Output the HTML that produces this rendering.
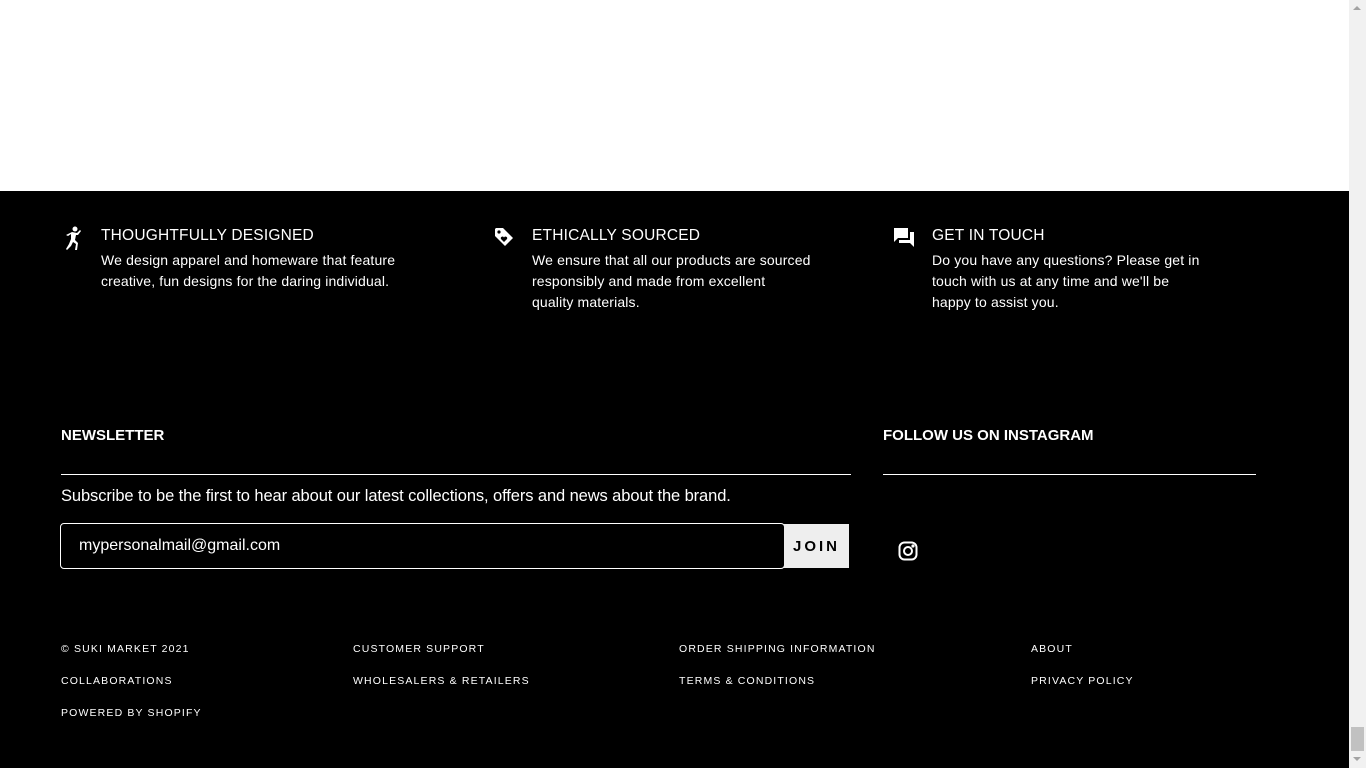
<!DOCTYPE html>
<html><head><meta charset="utf-8"><style>
*{margin:0;padding:0;box-sizing:border-box}
body{width:1366px;height:768px;overflow:hidden;background:#fff;font-family:"Liberation Sans",sans-serif;color:#fff;position:relative}
.foot{position:absolute;left:0;top:191px;width:1349px;height:577px;background:#000}
.a{position:absolute;white-space:nowrap}
.h{font-size:15.5px;letter-spacing:0.2px}
.p{font-size:14px;line-height:21px;letter-spacing:0.15px}
.s{font-size:10.5px;letter-spacing:1.15px}
.sb{position:absolute;left:1349px;top:0;width:17px;height:768px;background:#f1f1f1}
</style></head><body>
<div class="foot"></div>
<svg class="a" style="left:64px;top:226px" width="18" height="24" viewBox="0 0 18 24" fill="#fff"><circle cx="11" cy="3" r="2.5"/><path d="M8 6l5 1 3-3 1 1-3 4-2 0-1 5 3 3-1 7-2 0 1-6-3-2-2 4-4 4-1-1 3-5 2-5 0-5-3 2-2-1z"/></svg>
<svg class="a" style="left:494px;top:227px" width="20" height="20" viewBox="0 0 20 20"><path d="M1 2v7l10 10 8-8L9 1H2z" fill="#fff"/><circle cx="5" cy="5" r="1.6" fill="#000"/><path d="M10 15l-3-3a1.6 1.6 0 0 1 3-1.5a1.6 1.6 0 0 1 3 1.5z" fill="#000"/></svg>
<svg class="a" style="left:893px;top:227px" width="22" height="21" viewBox="0 0 22 21" fill="#fff"><path d="M1 1h14v10H5l-4 4z"/><path d="M17 5h4v15l-4-4H6v-3h11z"/></svg>
<div class="a h" style="left:101px;top:227px">THOUGHTFULLY DESIGNED</div>
<div class="a p" style="left:101px;top:250px">We design apparel and homeware that feature<br>creative, fun designs for the daring individual.</div>
<div class="a h" style="left:532px;top:227px">ETHICALLY SOURCED</div>
<div class="a p" style="left:532px;top:250px">We ensure that all our products are sourced<br>responsibly and made from excellent<br>quality materials.</div>
<div class="a h" style="left:932px;top:227px">GET IN TOUCH</div>
<div class="a p" style="left:932px;top:250px">Do you have any questions? Please get in<br>touch with us at any time and we'll be<br>happy to assist you.</div>
<div class="a" style="left:61px;top:427px;font-size:15px;font-weight:bold">NEWSLETTER</div>
<div class="a" style="left:61px;top:474px;width:790px;height:1px;background:#fff"></div>
<div class="a" style="left:883px;top:427px;font-size:15px;font-weight:bold">FOLLOW US ON INSTAGRAM</div>
<div class="a" style="left:883px;top:474px;width:373px;height:1px;background:#fff"></div>
<div class="a" style="left:61px;top:487px;font-size:16.5px;letter-spacing:-0.1px">Subscribe to be the first to hear about our latest collections, offers and news about the brand.</div>
<div class="a" style="left:60px;top:523px;width:725px;height:46px;border:1px solid #fff;border-radius:4px"></div>
<div class="a" style="left:79px;top:537px;font-size:16px">mypersonalmail@gmail.com</div>
<div class="a" style="left:784px;top:524px;width:65px;height:44px;background:#eee;color:#000;font-weight:bold;font-size:15px;letter-spacing:3px;text-align:center;line-height:46px">JOIN</div>
<svg class="a" style="left:898px;top:541px" width="20" height="20" viewBox="0 0 20 20" fill="none" stroke="#fff" stroke-width="2"><rect x="1.5" y="1.5" width="17" height="17" rx="5"/><circle cx="10" cy="10" r="4"/><circle cx="15" cy="5" r=".6" fill="#fff"/></svg>
<div class="a s" style="left:61px;top:643px">© SUKI MARKET 2021</div>
<div class="a s" style="left:61px;top:675px">COLLABORATIONS</div>
<div class="a s" style="left:61px;top:707px">POWERED BY SHOPIFY</div>
<div class="a s" style="left:353px;top:643px">CUSTOMER SUPPORT</div>
<div class="a s" style="left:353px;top:675px">WHOLESALERS &amp; RETAILERS</div>
<div class="a s" style="left:679px;top:643px">ORDER SHIPPING INFORMATION</div>
<div class="a s" style="left:679px;top:675px">TERMS &amp; CONDITIONS</div>
<div class="a s" style="left:1031px;top:643px">ABOUT</div>
<div class="a s" style="left:1031px;top:675px">PRIVACY POLICY</div>
<div class="sb">
<div style="position:absolute;left:4px;top:6px;width:0;height:0;border-left:4px solid transparent;border-right:4px solid transparent;border-bottom:4px solid #a3a3a3"></div>
<div style="position:absolute;left:2px;top:727px;width:13px;height:24px;background:#c1c1c1"></div>
<div style="position:absolute;left:4px;top:757px;width:0;height:0;border-left:4px solid transparent;border-right:4px solid transparent;border-top:4px solid #a3a3a3"></div>
</div>
</body></html>
